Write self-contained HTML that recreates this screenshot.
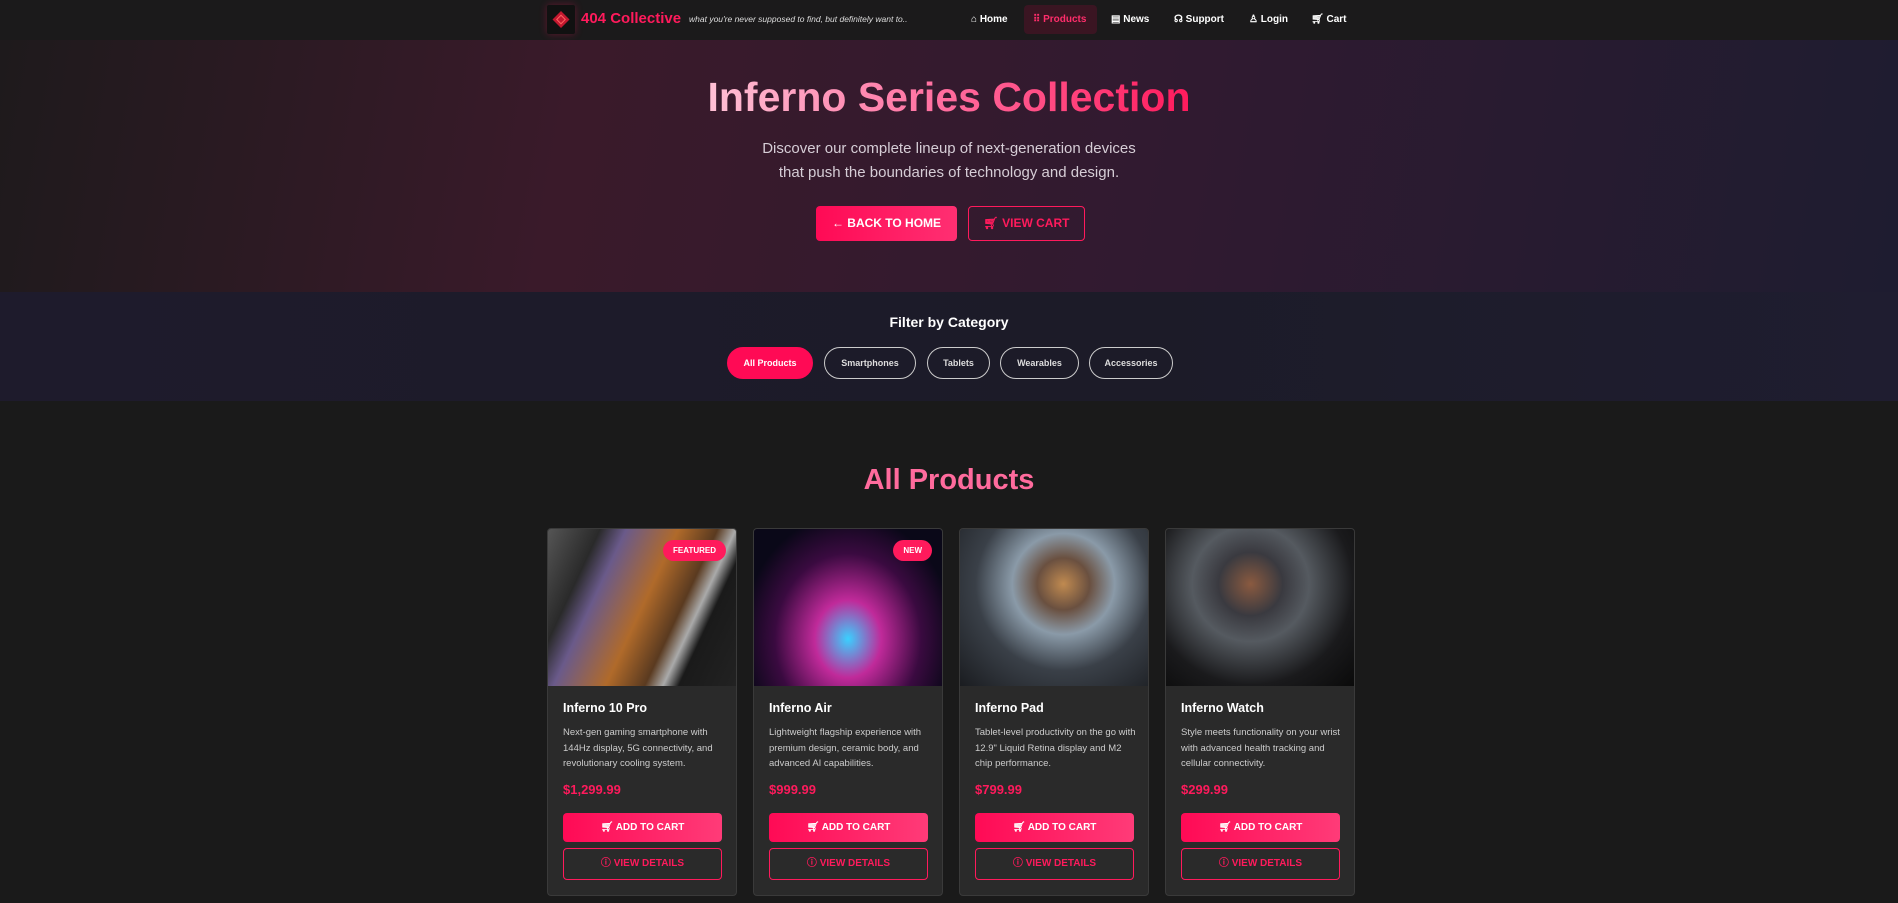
<!DOCTYPE html>
<html><head><meta charset="utf-8"><style>
*{box-sizing:border-box;margin:0;padding:0}
body{width:1898px;height:903px;overflow:hidden;background:#1a1a1a;font-family:"Liberation Sans",sans-serif;color:#fff;position:relative}
.abs{position:absolute}
nav{position:absolute;left:0;top:0;width:1898px;height:40px;background:#1b1a1b}
.logo{left:547px;top:5px;width:28px;height:29px;background:#111;border-radius:2px;box-shadow:0 0 8px rgba(255,20,90,.3)}
.brand{left:581px;top:10px;font-size:15px;font-weight:bold;color:#ff1a5c}
.tag{left:689px;top:14px;font-size:8.5px;font-style:italic;color:#ddd}
.ni{top:14px;font-size:10px;font-weight:bold;color:#fff}
.prod{left:1024px;top:5px;width:73px;height:29px;background:#3a1522;border-radius:4px;color:#ff2d6b;font-size:10px;font-weight:bold;padding:9px 0 0 9px}
.hero{left:0;top:40px;width:1898px;height:252px;background:linear-gradient(100deg,#1e1a1c 0%,#3a1a2a 30%,#311a30 60%,#1e1c30 100%)}
.tw{position:absolute;left:0;width:1898px;top:74px;text-align:center}
h1{font-size:41px;font-weight:bold;background:linear-gradient(90deg,#ffc0d5,#ff6b9d 50%,#ff1a5c);-webkit-background-clip:text;background-clip:text;color:transparent;display:inline-block}
.sub{left:0;width:1898px;top:137px;text-align:center;font-size:15px;line-height:24px;color:#d6cdd6}
.btn1{left:816px;top:206px;width:141px;height:35px;border-radius:4px;background:linear-gradient(90deg,#ff0a55,#ff2f72);font-size:12px;font-weight:bold;text-align:center;line-height:35px}
.btn2{left:968px;top:206px;width:117px;height:35px;border-radius:4px;border:1px solid #ff1a5c;color:#ff1a5c;font-size:12px;font-weight:bold;text-align:center;line-height:33px}
.filter{left:0;top:292px;width:1898px;height:109px;background:linear-gradient(90deg,#1e1b2c,#1c1b28 60%,#1f1d30)}
.ft{left:0;width:1898px;top:314px;text-align:center;font-size:14px;font-weight:bold}
.pill{top:347px;height:32px;border-radius:16px;border:1px solid #ccc;font-size:9px;font-weight:bold;text-align:center;line-height:30px;color:#ddd}
.h2{left:0;width:1898px;top:464px;text-align:center;font-size:29px;font-weight:bold;color:#ff6b9d}
.card{top:528px;width:190px;height:368px;background:#2a2a2a;border:1px solid #3a3a3a;border-radius:4px;overflow:hidden}
.img{height:157px;width:100%;position:relative}
.card h3{position:absolute;left:15px;top:172px;font-size:12.5px;font-weight:bold}
.card p{position:absolute;left:15px;top:196px;width:165px;font-size:9.5px;line-height:15.5px;color:#ccc}
.price{position:absolute;left:15px;top:253px;font-size:13px;font-weight:bold;color:#ff1a5c}
.add{position:absolute;left:15px;top:284px;width:159px;height:29px;border-radius:4px;background:linear-gradient(90deg,#ff0a55,#ff3b78);font-size:10px;font-weight:bold;text-align:center;line-height:29px}
.vd{position:absolute;left:15px;top:319px;width:159px;height:32px;border-radius:4px;border:1px solid #ff1a5c;color:#ff1a5c;font-size:10px;font-weight:bold;text-align:center;line-height:30px}
.badge{position:absolute;right:10px;top:11px;height:21px;padding:0 10px;border-radius:11px;background:#ff1a5c;font-size:8px;font-weight:bold;line-height:21px}
</style></head><body>
<nav></nav>
<div class="abs logo"><svg width="28" height="29"><rect x="8" y="8.5" width="12" height="12" transform="rotate(45 14 14.5)" fill="#c2182f"/><rect x="11" y="11.5" width="6" height="6" transform="rotate(45 14 14.5)" fill="none" stroke="#ff6060" stroke-width="1"/></svg></div>
<div class="abs brand">404 Collective</div>
<div class="abs tag">what you're never supposed to find, but definitely want to..</div>
<div class="abs ni" style="left:971px">⌂ Home</div>
<div class="abs prod">⠿ Products</div>
<div class="abs ni" style="left:1111px">▤ News</div>
<div class="abs ni" style="left:1174px">☊ Support</div>
<div class="abs ni" style="left:1249px">♙ Login</div>
<div class="abs ni" style="left:1311px">🛒︎ Cart</div>
<div class="abs hero"></div>
<div class="tw"><h1>Inferno Series Collection</h1></div>
<div class="abs sub">Discover our complete lineup of next-generation devices<br>that push the boundaries of technology and design.</div>
<div class="abs btn1">← BACK TO HOME</div>
<div class="abs btn2">🛒︎ VIEW CART</div>
<div class="abs filter"></div>
<div class="abs ft">Filter by Category</div>
<div class="abs pill" style="left:727px;width:86px;background:#ff0a55;border-color:#ff0a55;color:#fff">All Products</div>
<div class="abs pill" style="left:824px;width:92px">Smartphones</div>
<div class="abs pill" style="left:927px;width:63px">Tablets</div>
<div class="abs pill" style="left:1000px;width:79px">Wearables</div>
<div class="abs pill" style="left:1089px;width:84px">Accessories</div>
<div class="abs h2">All Products</div>

<div class="abs card" style="left:547px"><div class="img" style="background:linear-gradient(115deg,#555 0%,#2a2a2a 20%,#6a5a8a 30%,#b06a2a 50%,#5a3a20 65%,#aaa 72%,#1a1a1a 78%,#222 100%)"><span class="badge">FEATURED</span></div>
<h3>Inferno 10 Pro</h3><p>Next-gen gaming smartphone with 144Hz display, 5G connectivity, and revolutionary cooling system.</p><div class="price">$1,299.99</div><div class="add">🛒︎ ADD TO CART</div><div class="vd">ⓘ VIEW DETAILS</div></div>

<div class="abs card" style="left:753px"><div class="img" style="background:radial-gradient(ellipse at 50% 70%,#3ad0ff 0%,#c02a9a 25%,#3a0a40 55%,#0a0818 80%)"><span class="badge">NEW</span></div>
<h3>Inferno Air</h3><p>Lightweight flagship experience with premium design, ceramic body, and advanced AI capabilities.</p><div class="price">$999.99</div><div class="add">🛒︎ ADD TO CART</div><div class="vd">ⓘ VIEW DETAILS</div></div>

<div class="abs card" style="left:959px"><div class="img" style="background:radial-gradient(ellipse at 55% 35%,#c08a50 0%,#6a5040 18%,#8a9aa8 35%,#3a4048 60%,#1a1c20 100%)"></div>
<h3>Inferno Pad</h3><p>Tablet-level productivity on the go with 12.9" Liquid Retina display and M2 chip performance.</p><div class="price">$799.99</div><div class="add">🛒︎ ADD TO CART</div><div class="vd">ⓘ VIEW DETAILS</div></div>

<div class="abs card" style="left:1165px"><div class="img" style="background:radial-gradient(ellipse at 45% 35%,#8a5a40 0%,#3a3a40 22%,#555a60 40%,#1a1a1c 70%,#0a0a0a 100%)"></div>
<h3>Inferno Watch</h3><p>Style meets functionality on your wrist with advanced health tracking and cellular connectivity.</p><div class="price">$299.99</div><div class="add">🛒︎ ADD TO CART</div><div class="vd">ⓘ VIEW DETAILS</div></div>
</body></html>
